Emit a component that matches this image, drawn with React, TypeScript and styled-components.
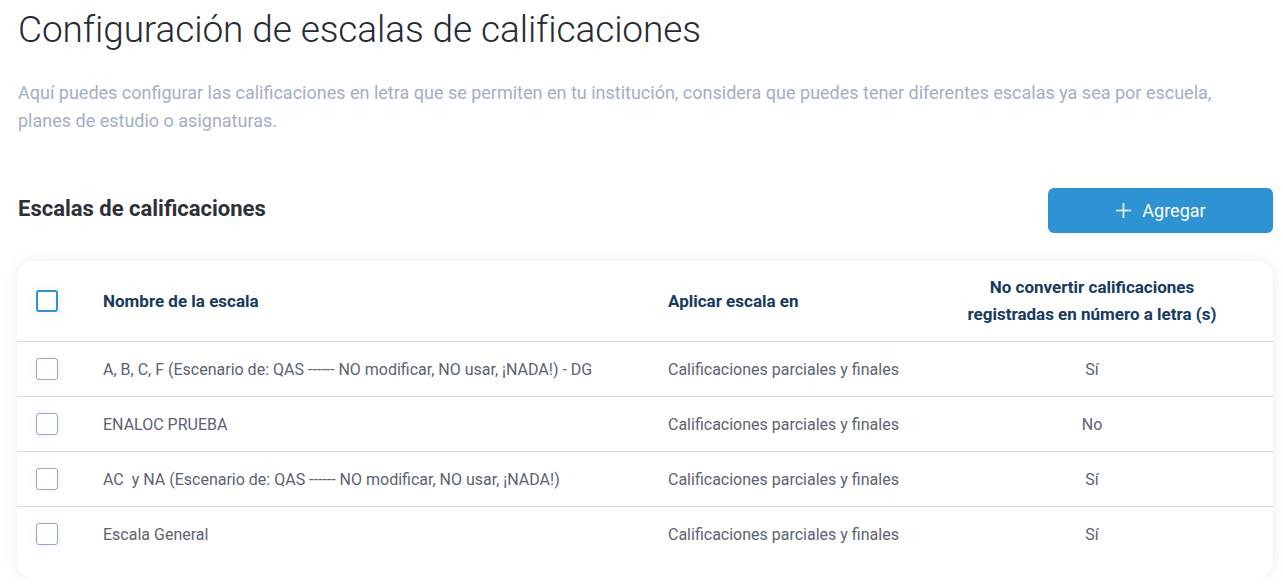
import styled, { createGlobalStyle } from 'styled-components';

const GlobalStyle = createGlobalStyle`
  body {
    margin: 0;
    background: #ffffff;
    font-family: Roboto, "Noto Sans", sans-serif;
  }
`;

const Page = styled.div`
  padding: 0 10px 0 17px;
`;

const Title = styled.h1`
  margin: 0;
  padding-top: 7px;
  padding-left: 1px;
  font-size: 37px;
  line-height: 46px;
  font-weight: 300;
  color: #262a33;
  letter-spacing: -0.1px;
`;

const Description = styled.p`
  margin: 26px 0 0 1px;
  font-size: 18px;
  line-height: 28px;
  color: #a3afc4;
  max-width: 1240px;
`;

const SectionBar = styled.div`
  display: flex;
  align-items: center;
  justify-content: space-between;
  margin-top: 53px;
`;

const SectionTitle = styled.h2`
  margin: 0 0 5px 1px;
  font-size: 22px;
  font-weight: 700;
  color: #2d3039;
`;

const AddButton = styled.button`
  display: flex;
  align-items: center;
  justify-content: center;
  gap: 10px;
  width: 225px;
  height: 45px;
  border: none;
  border-radius: 6px;
  background: #2e93d2;
  color: #ffffff;
  font-family: inherit;
  font-size: 18px;
  cursor: pointer;
`;

const Card = styled.div`
  margin-top: 28px;
  background: #ffffff;
  border-radius: 16px;
  box-shadow: 0 0 14px rgba(60, 80, 140, 0.1);
  padding-bottom: 17px;
`;

const Row = styled.div<{ $header?: boolean }>`
  display: grid;
  grid-template-columns: 86px 565px 243px 1fr;
  align-items: center;
  height: ${(p) => (p.$header ? '80px' : '54px')};
  border-bottom: 1px solid #d3dbe6;
  &:last-child {
    border-bottom: none;
  }
`;

const Cell = styled.div<{ $center?: boolean; $header?: boolean }>`
  text-align: ${(p) => (p.$center ? 'center' : 'left')};
  font-size: ${(p) => (p.$header ? '17px' : '16px')};
  font-weight: ${(p) => (p.$header ? 700 : 400)};
  line-height: 27px;
  color: ${(p) => (p.$header ? '#163a5e' : '#5c6372')};
`;

const CheckCell = styled.div`
  display: flex;
  justify-content: center;
  padding-right: 26px;
`;

const Check = styled.span<{ $primary?: boolean }>`
  display: block;
  width: 22px;
  height: 22px;
  box-sizing: border-box;
  border: ${(p) => (p.$primary ? '2px solid #2e93d2' : '1.5px solid #93a7c8')};
  border-radius: 3px;
  background: #ffffff;
  box-shadow: 0 0 8px rgba(60, 80, 140, 0.08);
`;

const rows = [
  { name: 'A, B, C, F (Escenario de: QAS ------ NO modificar, NO usar, ¡NADA!) - DG', apply: 'Calificaciones parciales y finales', keep: 'Sí' },
  { name: 'ENALOC PRUEBA', apply: 'Calificaciones parciales y finales', keep: 'No' },
  { name: 'AC\u00a0 y NA (Escenario de: QAS ------ NO modificar, NO usar, ¡NADA!)', apply: 'Calificaciones parciales y finales', keep: 'Sí' },
  { name: 'Escala General', apply: 'Calificaciones parciales y finales', keep: 'Sí' },
];

export default function App() {
  return (
    <Page>
      <GlobalStyle />
      <Title>Configuración de escalas de calificaciones</Title>
      <Description>
        Aquí puedes configurar las calificaciones en letra que se permiten en tu institución, considera que puedes tener diferentes escalas ya sea por escuela, planes de estudio o asignaturas.
      </Description>
      <SectionBar>
        <SectionTitle>Escalas de calificaciones</SectionTitle>
        <AddButton>
          <svg width="17" height="17" viewBox="0 0 17 17" fill="none" stroke="#ffffff" strokeWidth="1.6">
            <path d="M8.5 1v15M1 8.5h15" />
          </svg>
          Agregar
        </AddButton>
      </SectionBar>
      <Card>
        <Row $header>
          <CheckCell><Check $primary /></CheckCell>
          <Cell $header>Nombre de la escala</Cell>
          <Cell $header>Aplicar escala en</Cell>
          <Cell $header $center>
            No convertir calificaciones
            <br />
            registradas en número a letra (s)
          </Cell>
        </Row>
        {rows.map((r) => (
          <Row key={r.name}>
            <CheckCell><Check /></CheckCell>
            <Cell>{r.name}</Cell>
            <Cell>{r.apply}</Cell>
            <Cell $center>{r.keep}</Cell>
          </Row>
        ))}
      </Card>
    </Page>
  );
}
